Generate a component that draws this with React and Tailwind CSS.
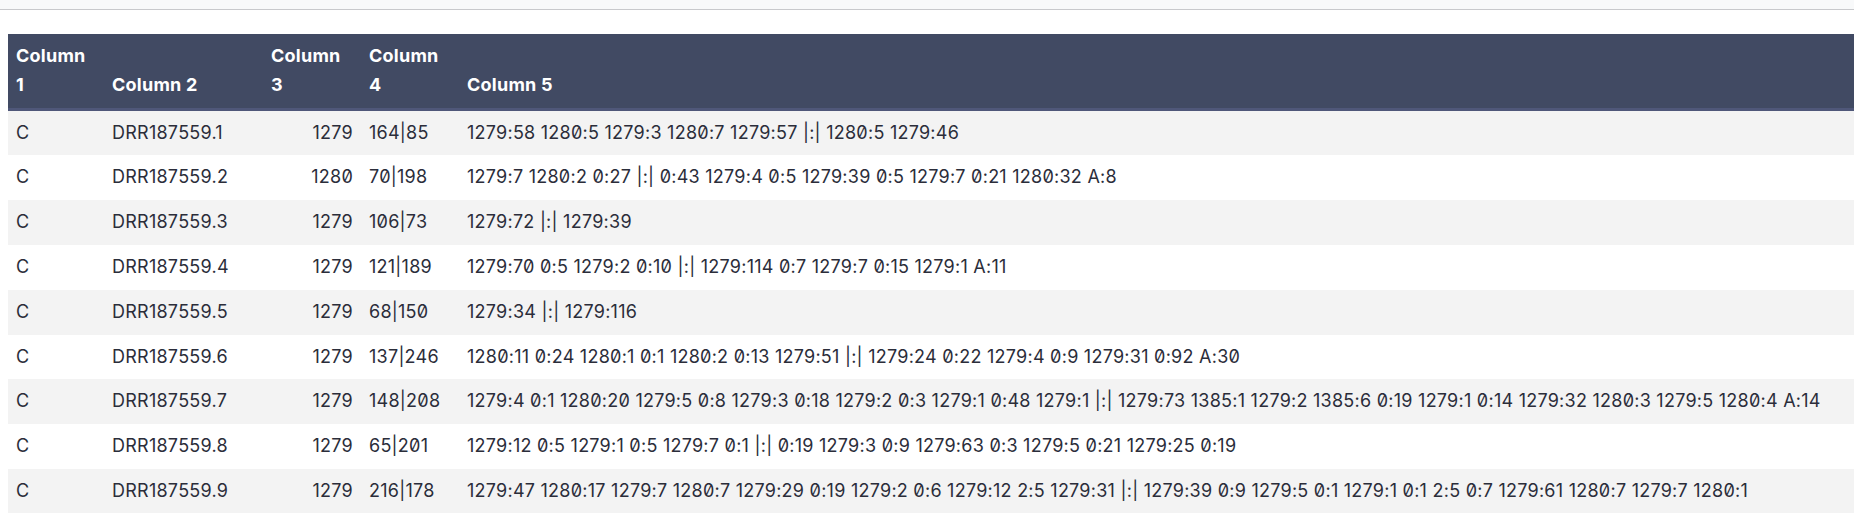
import React from 'react';

const rows = [
  ['C', 'DRR187559.1', '1279', '164|85', '1279:58 1280:5 1279:3 1280:7 1279:57 |:| 1280:5 1279:46'],
  ['C', 'DRR187559.2', '1280', '70|198', '1279:7 1280:2 0:27 |:| 0:43 1279:4 0:5 1279:39 0:5 1279:7 0:21 1280:32 A:8'],
  ['C', 'DRR187559.3', '1279', '106|73', '1279:72 |:| 1279:39'],
  ['C', 'DRR187559.4', '1279', '121|189', '1279:70 0:5 1279:2 0:10 |:| 1279:114 0:7 1279:7 0:15 1279:1 A:11'],
  ['C', 'DRR187559.5', '1279', '68|150', '1279:34 |:| 1279:116'],
  ['C', 'DRR187559.6', '1279', '137|246', '1280:11 0:24 1280:1 0:1 1280:2 0:13 1279:51 |:| 1279:24 0:22 1279:4 0:9 1279:31 0:92 A:30'],
  ['C', 'DRR187559.7', '1279', '148|208', '1279:4 0:1 1280:20 1279:5 0:8 1279:3 0:18 1279:2 0:3 1279:1 0:48 1279:1 |:| 1279:73 1385:1 1279:2 1385:6 0:19 1279:1 0:14 1279:32 1280:3 1279:5 1280:4 A:14'],
  ['C', 'DRR187559.8', '1279', '65|201', '1279:12 0:5 1279:1 0:5 1279:7 0:1 |:| 0:19 1279:3 0:9 1279:63 0:3 1279:5 0:21 1279:25 0:19'],
  ['C', 'DRR187559.9', '1279', '216|178', '1279:47 1280:17 1279:7 1280:7 1279:29 0:19 1279:2 0:6 1279:12 2:5 1279:31 |:| 1279:39 0:9 1279:5 0:1 1279:1 0:1 2:5 0:7 1279:61 1280:7 1279:7 1280:1'],
];

const App = () => {
  return (
    <div className="w-[1854px] h-[513px] overflow-hidden bg-white font-['Inter',sans-serif] [font-feature-settings:'zero'] text-[18px] leading-[28.8px] tracking-[0.25px] text-[#2b2d3a]">
      {/* top strip */}
      <div className="h-[10px] bg-[#f8f9fa] border-b border-[#c8c9cc]" />

      <div className="pt-[24px] pl-2">
        <table className="table-fixed border-collapse w-[1846px]">
          <colgroup>
            <col className="w-[96px]" />
            <col className="w-[159px]" />
            <col className="w-[98px]" />
            <col className="w-[98px]" />
            <col />
          </colgroup>
          <thead>
            <tr className="bg-[#414a63] text-white border-b-[3px] border-[#4f5779]">
              <th className="px-2 py-2 text-left align-bottom font-bold">Column<br />1</th>
              <th className="px-2 py-2 text-left align-bottom font-bold">Column 2</th>
              <th className="px-2 py-2 text-left align-bottom font-bold">Column<br />3</th>
              <th className="px-2 py-2 text-left align-bottom font-bold">Column<br />4</th>
              <th className="px-2 py-2 text-left align-bottom font-bold">Column 5</th>
            </tr>
          </thead>
          <tbody>
            {rows.map((row, index) => (
              <tr key={index} className={index % 2 === 0 ? 'bg-[#f3f3f3]' : 'bg-white'}>
                <td className="px-2 py-2">{row[0]}</td>
                <td className="px-2 py-2">{row[1]}</td>
                <td className="px-2 py-2 text-right">{row[2]}</td>
                <td className="px-2 py-2">{row[3]}</td>
                <td className="px-2 py-2 whitespace-nowrap">{row[4]}</td>
              </tr>
            ))}
          </tbody>
        </table>
      </div>
    </div>
  );
};

export default App;
